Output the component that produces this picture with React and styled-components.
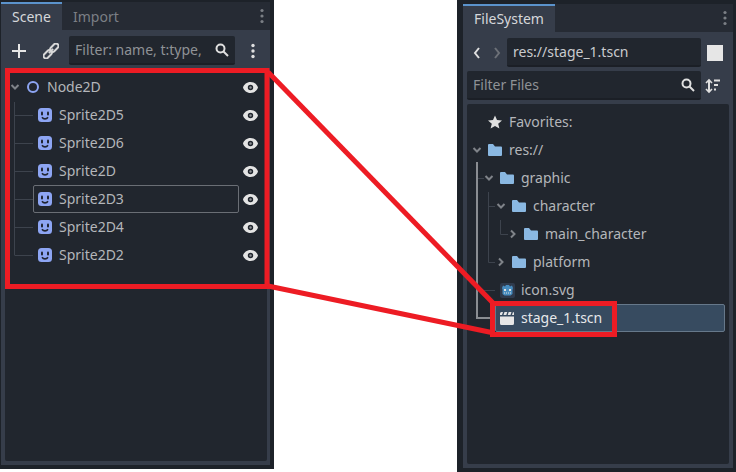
import styled, { createGlobalStyle } from "styled-components";

const GlobalStyle = createGlobalStyle`
  html, body {
    margin: 0;
    padding: 0;
    background: #fff;
  }
  * {
    box-sizing: border-box;
  }
`;

const Page = styled.div`
  position: relative;
  width: 736px;
  height: 472px;
  display: flex;
  align-items: flex-start;
  justify-content: space-between;
  overflow: hidden;
  font-family: "Noto Sans", sans-serif;
  font-size: 14px;
`;

const Dock = styled.section`
  width: ${(p) => p.$width}px;
  height: ${(p) => p.$height}px;
  padding: ${(p) => p.$padding};
  background: #1d2229;
  display: flex;
  flex-direction: column;
`;

const TabBar = styled.div`
  height: 28px;
  flex: none;
  display: flex;
  align-items: stretch;
  background: #262b34;
`;

const Tab = styled.div`
  width: ${(p) => p.$width}px;
  padding-left: 11px;
  line-height: 25px;
  color: ${(p) => (p.$active ? "#d5d7da" : "#7b7f85")};
  background: ${(p) => (p.$active ? "#363d4a" : "transparent")};
  border-top: 2px solid ${(p) => (p.$active ? "#5b93cc" : "transparent")};
`;

const TabMenu = styled.div`
  margin-left: auto;
  width: 16px;
  display: flex;
  align-items: center;
  justify-content: center;
  color: #7b7f85;
`;

const Body = styled.div`
  flex: 1;
  min-height: 0;
  background: #363d4a;
  padding: ${(p) => p.$padding};
  display: flex;
  flex-direction: column;
`;

const Toolbar = styled.div`
  flex: none;
  height: 29px;
  display: flex;
  align-items: center;
  margin-bottom: ${(p) => p.$below}px;
`;

const IconSlot = styled.div`
  width: ${(p) => p.$width}px;
  flex: none;
  display: flex;
  align-items: center;
  justify-content: center;
`;

const Input = styled.div`
  height: 29px;
  width: ${(p) => p.$width}px;
  flex: none;
  padding: 0 6px;
  display: flex;
  align-items: center;
  justify-content: space-between;
  background: #21262e;
  border-bottom: 2px solid #1b1f26;
  border-radius: 2px;
  color: ${(p) => (p.$value ? "#c9cbce" : "#8f9296")};
  white-space: nowrap;
`;

const Tree = styled.div`
  position: relative;
  flex: 1;
  min-height: 0;
  background: #21262e;
  border-radius: 2px;
  padding-top: ${(p) => p.$top}px;
`;

const Guides = styled.svg`
  position: absolute;
  left: 0;
  top: 0;
  pointer-events: none;
`;

const Row = styled.div`
  position: relative;
  height: 28px;
  display: flex;
  align-items: center;
  color: ${(p) => (p.$selected ? "#e6e8ea" : "#b4b6ba")};
  padding-left: ${(p) => p.$indent}px;
  padding-right: 8px;
`;

const Frame = styled.div`
  position: absolute;
  top: 0;
  bottom: 0;
  left: ${(p) => p.$left}px;
  right: ${(p) => p.$right}px;
  border: 1px solid ${(p) => p.$line};
  border-radius: 2px;
  background: ${(p) => p.$fill};
`;

const Arrow = styled.span`
  width: 14px;
  flex: none;
  display: flex;
  justify-content: center;
  margin-right: 3px;
`;

const RowIcon = styled.span`
  position: relative;
  width: 16px;
  flex: none;
  display: flex;
  justify-content: center;
`;

const Label = styled.span`
  position: relative;
  margin-left: 6px;
  padding-bottom: 2px;
`;

const Eye = styled.span`
  position: relative;
  margin-left: auto;
  margin-right: 1px;
  display: flex;
`;

const Annotation = styled.svg`
  position: absolute;
  left: 0;
  top: 0;
  pointer-events: none;
`;

const Dots = ({ color = "#7b7f85", r = 1.6 }) => (
  <svg width="6" height="16" viewBox="0 0 6 16">
    <circle cx="3" cy="2.5" r={r} fill={color} />
    <circle cx="3" cy="8" r={r} fill={color} />
    <circle cx="3" cy="13.5" r={r} fill={color} />
  </svg>
);

const Search = () => (
  <svg width="14" height="14" viewBox="0 0 14 14" fill="none" stroke="#e0e0e0" strokeWidth="2">
    <circle cx="5.5" cy="5.5" r="4" />
    <path d="M8.5 8.5 13 13" />
  </svg>
);

const Plus = () => (
  <svg width="14" height="14" viewBox="0 0 14 14" stroke="#e6e6e6" strokeWidth="2">
    <path d="M7 0v14M0 7h14" />
  </svg>
);

const LinkIcon = () => (
  <svg width="16" height="16" viewBox="0 0 16 16" fill="none" stroke="#d8d8d8" strokeWidth="2">
    <g transform="rotate(-45 8 8)">
      <rect x="-1.5" y="5.500" width="9.500" height="5" rx="2.500" />
      <rect x="8" y="5.500" width="9.500" height="5" rx="2.500" />
      <path d="M5 8h6" />
    </g>
  </svg>
);

const Chevron = ({ open }) => (
  <svg width="10" height="10" viewBox="0 0 10 10" fill="none" stroke="#7f8389" strokeWidth="2">
    {open ? <path d="M1.5 3 5 6.5 8.500 3" /> : <path d="M3 1.500 6.500 5 3 8.500" />}
  </svg>
);

const EyeIcon = () => (
  <svg width="15" height="11" viewBox="0 0 15 11">
    <path
      fillRule="evenodd"
      fill="#e4e4e4"
      d="M7.500 0C3.800 0 1 2.400 0 5.500 1 8.600 3.800 11 7.500 11S14 8.600 15 5.500C14 2.400 11.200 0 7.500 0ZM7.500 2.800a2.700 2.700 0 1 1 0 5.400 2.700 2.700 0 0 1 0-5.400Z"
    />
    <circle cx="7.500" cy="5.500" r="1.200" fill="#8b8e93" />
  </svg>
);

const NodeRing = () => (
  <svg width="14" height="14" viewBox="0 0 14 14" fill="none">
    <circle cx="7" cy="7" r="5" stroke="#8da5f3" strokeWidth="2" />
  </svg>
);

const SpriteIcon = () => (
  <svg width="14" height="14" viewBox="0 0 14 14">
    <rect width="14" height="14" rx="3.500" fill="#8da5f3" />
    <rect x="3" y="3.500" width="2" height="4" rx="1" fill="#1f2430" />
    <rect x="9" y="3.500" width="2" height="4" rx="1" fill="#1f2430" />
    <path d="M4 9.200c1.500 2.200 4.500 2.200 6 0" fill="none" stroke="#1f2430" strokeWidth="1.600" />
  </svg>
);

const Folder = () => (
  <svg width="14" height="12" viewBox="0 0 14 12">
    <path d="M0 1a1 1 0 0 1 1-1h4l2 2.500h6a1 1 0 0 1 1 1V11a1 1 0 0 1-1 1H1a1 1 0 0 1-1-1Z" fill="#8ab8e2" />
  </svg>
);

const Star = () => (
  <svg width="14" height="14" viewBox="0 0 14 14">
    <path d="M7 0.500 9 5l5 .4-3.800 3.300L11.400 13.500 7 11 2.600 13.500 3.800 8.700 0 5.400 5 5Z" fill="#e0e0e0" />
  </svg>
);

const SortIcon = () => (
  <svg width="16" height="16" viewBox="0 0 16 16" fill="none" stroke="#e0e0e0" strokeWidth="2">
    <path d="M4 2v12" />
    <path d="M1 5 4 2l3 3M1 11l3 3 3-3" strokeWidth="1.600" />
    <path d="M9 2.500h6M9 7h4M9 11.500h2" />
  </svg>
);

const NavArrow = ({ flip, color }) => (
  <svg width="8" height="12" viewBox="0 0 8 12" fill="none" stroke={color} strokeWidth="2">
    <path d={flip ? "M2 1l4 5-4 5" : "M6 1 2 6l4 5"} />
  </svg>
);

const ThemeSquare = styled.div`
  width: 16px;
  height: 16px;
  background: #e6e6e6;
`;

const GodotIcon = () => (
  <svg width="15" height="15" viewBox="0 0 15 15">
    <rect width="15" height="15" rx="2" fill="#2f3a4c" />
    <path d="M2 5 3 2.500 5 3.500 6 2h3l1 1.500 2-1L13 5l-.5 1.500V11l-2 1.500h-6L2.500 11V6.500Z" fill="#478cbf" />
    <rect x="4" y="6" width="2" height="2" fill="#e0e0e0" />
    <rect x="9" y="6" width="2" height="2" fill="#e0e0e0" />
    <path d="M4 10h7" stroke="#e0e0e0" strokeDasharray="1 1" />
  </svg>
);

const Clapper = () => (
  <svg width="14" height="13" viewBox="0 0 14 13">
    <path d="M0 1.500V3h2l1-3H1.500A1.500 1.500 0 0 0 0 1.500ZM4.500 0l-1 3h2.800l1-3ZM8.700 0l-1 3h2.800l1-3ZM13 0l-1 3h2V1a1 1 0 0 0-1-1Z" fill="#e6e6e6" />
    <path d="M0 4.500h14v7a1.500 1.500 0 0 1-1.500 1.500h-11A1.500 1.500 0 0 1 0 11.500Z" fill="#e6e6e6" />
  </svg>
);

const sprites = ["Sprite2D5", "Sprite2D6", "Sprite2D", "Sprite2D3", "Sprite2D4", "Sprite2D2"];

const files = [
  { name: "res://", indent: 3, arrow: "open", icon: <Folder /> },
  { name: "graphic", indent: 15, arrow: "open", icon: <Folder /> },
  { name: "character", indent: 27, arrow: "open", icon: <Folder /> },
  { name: "main_character", indent: 39, arrow: "closed", icon: <Folder /> },
  { name: "platform", indent: 27, arrow: "closed", icon: <Folder /> },
  { name: "icon.svg", indent: 15, icon: <GodotIcon /> },
  { name: "stage_1.tscn", indent: 15, icon: <Clapper />, selected: true },
];

function SceneDock() {
  return (
    <Dock $width={274} $height={469} $padding="2px 4px 4px 1px">
      <TabBar>
        <Tab $active $width={61}>Scene</Tab>
        <Tab $width={70}>Import</Tab>
        <TabMenu>
          <Dots />
        </TabMenu>
      </TabBar>
      <Body $padding="6px 3px 4px 4px">
        <Toolbar $below={3}>
          <IconSlot $width={28}>
            <Plus />
          </IconSlot>
          <IconSlot $width={36}>
            <LinkIcon />
          </IconSlot>
          <Input $width={166}>
            Filter: name, t:type,
            <Search />
          </Input>
          <IconSlot $width={36}>
            <Dots color="#e0e0e0" r={1.700} />
          </IconSlot>
        </Toolbar>
        <Tree $top={5}>
          <Guides width="262" height="200">
            <path d="M9.500 34V187.500M10 47.500H28M10 75.500H28M10 103.500H28M10 131.500H28M10 159.500H28M10 187.500H28" stroke="#3d434d" fill="none" />
          </Guides>
          <Row $indent={3}>
            <Arrow>
              <Chevron open />
            </Arrow>
            <RowIcon>
              <NodeRing />
            </RowIcon>
            <Label>Node2D</Label>
            <Eye>
              <EyeIcon />
            </Eye>
          </Row>
          {sprites.map((name) => (
            <Row key={name} $indent={32}>
              {name === "Sprite2D3" && <Frame $left={28} $right={28} $line="#6a6e75" $fill="transparent" />}
              <RowIcon>
                <SpriteIcon />
              </RowIcon>
              <Label>{name}</Label>
              <Eye>
                <EyeIcon />
              </Eye>
            </Row>
          ))}
        </Tree>
      </Body>
    </Dock>
  );
}

function FileDock() {
  return (
    <Dock $width={279} $height={472} $padding="4px 3px 4px 6px">
      <TabBar>
        <Tab $active $width={92}>FileSystem</Tab>
        <TabMenu>
          <Dots />
        </TabMenu>
      </TabBar>
      <Body $padding="6px 4px 4px 4px">
        <Toolbar $below={4}>
          <IconSlot $width={20}>
            <NavArrow color="#e0e0e0" />
          </IconSlot>
          <IconSlot $width={20}>
            <NavArrow flip color="#6d7178" />
          </IconSlot>
          <Input $width={194} $value>res://stage_1.tscn</Input>
          <IconSlot $width={28}>
            <ThemeSquare />
          </IconSlot>
        </Toolbar>
        <Toolbar $below={4}>
          <Input $width={234}>
            Filter Files
            <Search />
          </Input>
          <IconSlot $width={24}>
            <SortIcon />
          </IconSlot>
        </Toolbar>
        <Tree $top={4}>
          <Guides width="262" height="230">
            <path d="M10 74.500H17M21.500 88V158.500H28M21.500 102.500H28M33.500 116V130.500H41M10 186.500H28" stroke="#3d434d" fill="none" />
            <path d="M10 58V214H28" stroke="#8a8d92" strokeWidth="2" fill="none" />
          </Guides>
          <Row $indent={20}>
            <RowIcon>
              <Star />
            </RowIcon>
            <Label>Favorites:</Label>
          </Row>
          {files.map((f) => (
            <Row key={f.name} $indent={f.indent} $selected={f.selected}>
              {f.selected && <Frame $left={28} $right={4} $line="#66788a" $fill="#374b60" />}
              <Arrow>{f.arrow && <Chevron open={f.arrow === "open"} />}</Arrow>
              <RowIcon>{f.icon}</RowIcon>
              <Label>{f.name}</Label>
            </Row>
          ))}
        </Tree>
      </Body>
    </Dock>
  );
}

export default function App() {
  return (
    <>
      <GlobalStyle />
      <Page>
        <SceneDock />
        <FileDock />
        <Annotation width="736" height="472">
          <g fill="none" stroke="#ed1c24" strokeWidth="5">
            <rect x="7.500" y="70.500" width="259.500" height="216" />
            <rect x="492.500" y="303.500" width="122" height="31" />
            <path d="M268 72 L494 304" />
            <path d="M268 286 L494 333" />
          </g>
        </Annotation>
      </Page>
    </>
  );
}
